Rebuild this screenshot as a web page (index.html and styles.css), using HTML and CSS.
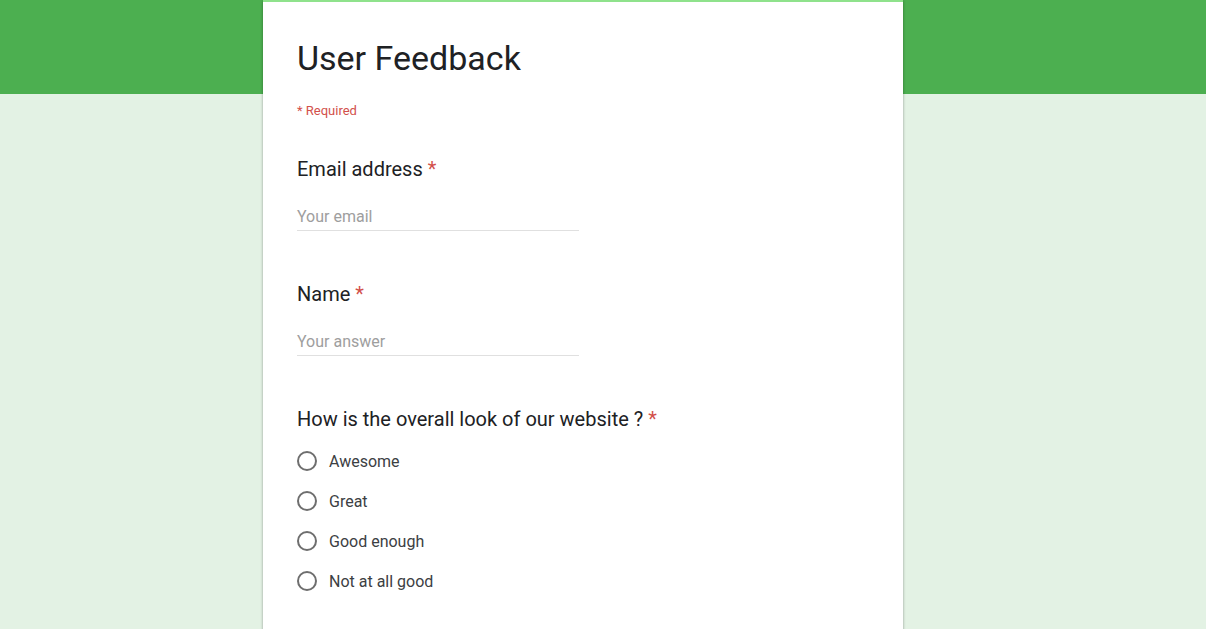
FILE: index.html
```html
<!DOCTYPE html>
<html>
<head>
<meta charset="utf-8">
<link rel="stylesheet" href="styles.css">
</head>
<body>
<div class="banner"></div>
<main class="card">
  <h1 class="title">User Feedback</h1>
  <div class="required">* Required</div>

  <section class="question">
    <div class="label">Email address <span class="star">*</span></div>
    <div class="input"><span class="placeholder">Your email</span></div>
  </section>

  <section class="question">
    <div class="label">Name <span class="star">*</span></div>
    <div class="input"><span class="placeholder">Your answer</span></div>
  </section>

  <section class="question">
    <div class="label">How is the overall look of our website ? <span class="star">*</span></div>
    <ul class="options">
      <li class="option"><span class="radio"></span><span class="opt-text">Awesome</span></li>
      <li class="option"><span class="radio"></span><span class="opt-text">Great</span></li>
      <li class="option"><span class="radio"></span><span class="opt-text">Good enough</span></li>
      <li class="option"><span class="radio"></span><span class="opt-text">Not at all good</span></li>
    </ul>
  </section>
</main>
</body>
</html>
```

FILE: styles.css
```css
html, body {
  margin: 0;
  padding: 0;
  height: 100%;
  overflow: hidden;
}
body {
  background: #e3f2e4;
  font-family: Roboto, "Noto Sans", Arial, sans-serif;
  position: relative;
}
.banner {
  height: 94px;
  background: #4caf50;
}
.card {
  position: absolute;
  top: 0;
  left: 263px;
  width: 640px;
  height: 700px;
  box-sizing: border-box;
  background: #fff;
  border-top: 2px solid #8fe28c;
  box-shadow: 0 1px 3px rgba(0,0,0,0.25), 0 0 2px rgba(0,0,0,0.12);
  padding: 36px 34px 0 34px;
}
.title {
  margin: 0;
  font-size: 34px;
  font-weight: 400;
  color: #202124;
  line-height: 40px;
  letter-spacing: 0;
}
.required {
  margin-top: 25px;
  font-size: 13px;
  color: #d2504b;
  line-height: 16px;
}
.question {
  margin-top: 38px;
}
.question + .question {
  margin-top: 51px;
}
.label {
  font-size: 20px;
  color: #202124;
  line-height: 24px;
}
.star {
  color: #d2504b;
}
.input {
  margin-top: 25px;
  width: 282px;
  border-bottom: 1px solid #e0e0e0;
  padding-top: 1px;
  padding-bottom: 3px;
  line-height: 20px;
}
.placeholder {
  font-size: 16px;
  color: #9e9e9e;
}
.options {
  list-style: none;
  margin: 10px 0 0 0;
  padding: 0;
}
.option {
  display: flex;
  align-items: center;
  height: 40px;
}
.radio {
  width: 16px;
  height: 16px;
  border: 2px solid #6e6e6e;
  border-radius: 50%;
  flex: none;
}
.opt-text {
  margin-left: 12px;
  font-size: 16px;
  color: #3c4043;
}
```
